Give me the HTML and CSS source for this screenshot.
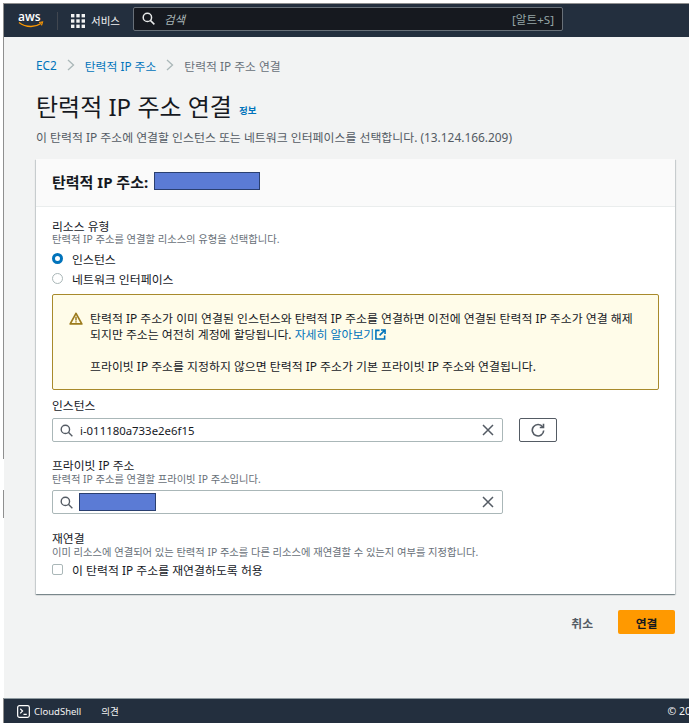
FILE: index.html
```html
<!DOCTYPE html>
<html lang="ko">
<head>
<meta charset="utf-8">
<title>탄력적 IP 주소 연결</title>
<link rel="stylesheet" href="styles.css">
</head>
<body>
<div class="frame">
  <header class="topnav">
    <svg class="aws" viewBox="0 0 28 17" width="28" height="17"><text x="0" y="9.5" class="aws-text">aws</text><path d="M1 11.500c3.500 2.800 8 4 12 4 3.300 0 7-1 10-3" fill="none" stroke="#f90" stroke-width="1.300"/><path d="M21 11.500l3.500-.5-1 3.300" fill="none" stroke="#f90" stroke-width="1.200"/></svg>
    <span class="nav-sep"></span>
    <svg class="grid-icon" viewBox="0 0 14 14" width="14" height="14" fill="#f2f3f3"><rect width="3.400" height="3.400"/><rect x="5.300" width="3.400" height="3.400"/><rect x="10.600" width="3.400" height="3.400"/><rect y="5.300" width="3.400" height="3.400"/><rect x="5.300" y="5.300" width="3.400" height="3.400"/><rect x="10.600" y="5.300" width="3.400" height="3.400"/><rect y="10.600" width="3.400" height="3.400"/><rect x="5.300" y="10.600" width="3.400" height="3.400"/><rect x="10.600" y="10.600" width="3.400" height="3.400"/></svg>
    <span class="nav-label">서비스</span>
    <div class="nav-search">
      <svg viewBox="0 0 14 14" width="13" height="13" fill="none" stroke="#e8eaea" stroke-width="1.600"><circle cx="5.800" cy="5.800" r="4.500"/><path d="M9 9l4.300 4.300"/></svg>
      <span class="nav-placeholder">검색</span>
      <span class="nav-shortcut">[알트+S]</span>
    </div>
  </header>

  <main class="content">
    <nav class="crumbs">
      <a class="link">EC2</a>
      <svg class="chev" viewBox="0 0 8 12" width="8" height="12"><path d="M1 1l5.500 5L1 11" fill="none" stroke="#aab7b8" stroke-width="1.300"/></svg>
      <a class="link">탄력적 IP 주소</a>
      <svg class="chev" viewBox="0 0 8 12" width="8" height="12"><path d="M1 1l5.500 5L1 11" fill="none" stroke="#aab7b8" stroke-width="1.300"/></svg>
      <span class="crumb-current">탄력적 IP 주소 연결</span>
    </nav>

    <div class="title-row">
      <h1>탄력적 IP 주소 연결</h1>
      <a class="info">정보</a>
    </div>
    <p class="lead">이 탄력적 IP 주소에 연결할 인스턴스 또는 네트워크 인터페이스를 선택합니다. (13.124.166.209)</p>

    <section class="card">
      <div class="card-head">
        <h2>탄력적 IP 주소:</h2>
        <span class="redact redact-head"></span>
      </div>
      <div class="card-body">
        <div class="field-label">리소스 유형</div>
        <div class="hint">탄력적 IP 주소를 연결할 리소스의 유형을 선택합니다.</div>
        <div class="radio-row radio-first"><span class="radio radio-on"></span><span>인스턴스</span></div>
        <div class="radio-row"><span class="radio"></span><span>네트워크 인터페이스</span></div>

        <div class="alert">
          <svg class="alert-icon" viewBox="0 0 14 13" width="14" height="13"><path d="M7 1.300L1.200 11.900h11.600z" fill="none" stroke="#9c7b1d" stroke-width="1.700" stroke-linejoin="round"/><path d="M7 4.800v3.600M7 9.200v1.200" stroke="#9c7b1d" stroke-width="1.500"/></svg>
          <div class="alert-text">
            <p>탄력적 IP 주소가 이미 연결된 인스턴스와 탄력적 IP 주소를 연결하면 이전에 연결된 탄력적 IP 주소가 연결 해제<br>되지만 주소는 여전히 계정에 할당됩니다. <a class="link">자세히 알아보기</a><svg class="ext" viewBox="0 0 12 12" width="11" height="11" fill="none" stroke="#0073bb" stroke-width="1.700"><path d="M5 1.500H1v9.500h9.500V7"/><path d="M6.500 1h4.500v4.500M11 1L5 7"/></svg></p>
            <p class="alert-gap">프라이빗 IP 주소를 지정하지 않으면 탄력적 IP 주소가 기본 프라이빗 IP 주소와 연결됩니다.</p>
          </div>
        </div>

        <div class="field-label label-inst">인스턴스</div>
        <div class="input-row">
          <div class="input">
            <svg viewBox="0 0 14 14" width="13" height="13" fill="none" stroke="#545b64" stroke-width="1.500"><circle cx="5.800" cy="5.800" r="4.500"/><path d="M9 9l4.300 4.300"/></svg>
            <span class="input-value">i-011180a733e2e6f15</span>
            <svg class="clear" viewBox="0 0 12 12" width="12" height="12" fill="none" stroke="#545b64" stroke-width="1.500"><path d="M1 1l10 10M11 1L1 11"/></svg>
          </div>
          <button class="refresh" type="button"><svg viewBox="0 0 14 14" width="14" height="14" fill="none" stroke="#545b64" stroke-width="1.600"><path d="M11.700 4A5.700 5.700 0 1 0 12.700 7.500"/><path d="M12.500 .8v3.700H8.800"/></svg></button>
        </div>

        <div class="field-label label-priv">프라이빗 IP 주소</div>
        <div class="hint hint-priv">탄력적 IP 주소를 연결할 프라이빗 IP 주소입니다.</div>
        <div class="input input-priv">
          <svg viewBox="0 0 14 14" width="13" height="13" fill="none" stroke="#545b64" stroke-width="1.500"><circle cx="5.800" cy="5.800" r="4.500"/><path d="M9 9l4.300 4.300"/></svg>
          <span class="redact redact-input"></span>
          <svg class="clear" viewBox="0 0 12 12" width="12" height="12" fill="none" stroke="#545b64" stroke-width="1.500"><path d="M1 1l10 10M11 1L1 11"/></svg>
        </div>

        <div class="field-label label-re">재연결</div>
        <div class="hint hint-re">이미 리소스에 연결되어 있는 탄력적 IP 주소를 다른 리소스에 재연결할 수 있는지 여부를 지정합니다.</div>
        <div class="radio-row check-row"><span class="check"></span><span>이 탄력적 IP 주소를 재연결하도록 허용</span></div>
      </div>
    </section>

    <div class="actions">
      <button class="btn-cancel" type="button">취소</button>
      <button class="btn-primary" type="button">연결</button>
    </div>
  </main>

  <footer class="foot">
    <svg viewBox="0 0 14 14" width="13" height="13" fill="none" stroke="#fff" stroke-width="1.300"><rect x=".7" y=".7" width="12.600" height="12.600" rx="2"/><path d="M3.500 4l2.500 2.500L3.500 9M7 10h3.500"/></svg>
    <span class="foot-shell">CloudShell</span>
    <span class="foot-fb">의견</span>
    <span class="foot-copy">© 2008</span>
  </footer>
</div>
<span class="frame-gap gap-a"></span>
<span class="frame-gap gap-b"></span>
</body>
</html>
```

FILE: styles.css
```css
* { box-sizing: border-box; }
html, body { margin: 0; padding: 0; background: #fff; }
body {
  width: 692px; height: 726px; overflow: hidden; position: relative;
  font-family: "Noto Sans", "Noto Sans CJK KR", sans-serif;
  font-size: 12px; color: #16191f; padding: 3px;
}
.frame {
  height: 720px; width: 686px; display: flex; flex-direction: column;
  border-top: 1px solid #8f8f8f; border-left: 1px solid #8f8f8f;
}
.topnav {
  height: 33px; flex: none; background: #232f3e; display: flex; align-items: center;
  padding-left: 14px; color: #f2f3f3;
}
.aws { flex: none; margin-top: -2px; }
.aws-text { font: 600 12px "Open Sans", sans-serif; fill: #fff; }
.nav-sep { width: 1px; height: 18px; background: #414750; margin: 0 13px 0 11px; }
.grid-icon { flex: none; }
.nav-label { margin-left: 6px; font-size: 10.500px; }
.nav-search {
  margin-left: 13px; width: 430px; height: 24px; flex: none; background: #16191f; border: 1px solid #687078;
  border-radius: 2px; display: flex; align-items: center; padding: 0 8px; margin-top: -4px;
}
.nav-placeholder { margin-left: 9px; font-style: italic; color: #aab7b8; font-size: 11.500px; }
.nav-shortcut { margin-left: auto; color: #95a5a6; font-size: 11.600px; }

.content { flex: 1; background: #f2f3f3; padding: 21px 14px 0 32px; min-height: 0; }
.crumbs { display: flex; align-items: center; height: 14px; font-size: 11.800px; }
.link { color: #0073bb; }
.chev { margin: 0 10px; }
.crumb-current { color: #687078; }
.title-row { display: flex; align-items: flex-end; margin-top: 20px; height: 30px; }
h1 { margin: 0; font-size: 24px; font-weight: 400; line-height: 30px; }
.info { color: #0073bb; font-size: 9.500px; font-weight: 700; margin: 0 0 4px 7px; line-height: 14px; }
.lead { margin: 7px 0 0; color: #545b64; font-size: 11.900px; line-height: 16px; }
.card {
  margin-top: 14px; width: 639px; height: 435px; background: #fff;
  box-shadow: 0 1px 1px 0 rgba(0,28,36,.35), 1px 1px 1px 0 rgba(0,28,36,.12), -1px 1px 1px 0 rgba(0,28,36,.12);
}
.card-head {
  height: 48px; background: #fafafa; border-bottom: 1px solid #eaeded; display: flex; align-items: center; padding: 0 16px 3px;
}
h2 { margin: 0; font-size: 15px; font-weight: 700; }
.redact { display: block; background: #5b7bd5; border: 1px solid #2a3f70; }
.redact-head { width: 106px; height: 18px; margin-left: 6px; }
.card-body { padding: 12px 16px 0; }
.field-label { font-size: 11.800px; line-height: 14px; color: #16191f; }
.hint { font-size: 10.300px; line-height: 13px; color: #687078; }
.radio-row { display: flex; align-items: center; gap: 9px; height: 20px; font-size: 11.900px; }
.radio-first { margin-top: 2px; }
.radio { width: 11px; height: 11px; border-radius: 50%; border: 1px solid #aab7b8; background: #fff; flex: none; }
.radio-on { border: 3.500px solid #0073bb; }
.alert {
  margin-top: 6px; width: 607px; height: 96px; background: #fffce9; border: 1px solid #a88a2c;
  border-radius: 2px; display: flex; padding: 15px 16px 0 16px; gap: 7px;
}
.alert-icon { flex: none; margin-top: 2px; }
.alert-text { font-size: 11.900px; line-height: 16px; word-break: keep-all; }
.alert-text p { margin: 0; }
.alert-text .alert-gap { margin-top: 16px; }
.ext { vertical-align: -1px; margin-left: 1px; }
.label-inst { margin-top: 8px; }
.input-row { display: flex; gap: 16px; margin-top: 6px; }
.input {
  width: 451px; height: 24px; background: #fff; border: 1px solid #aab7b8; border-radius: 2px;
  display: flex; align-items: center; padding: 0 7px; flex: none;
}
.input-value { margin-left: 7px; font-size: 11.400px; color: #16191f; }
.clear { margin-left: auto; margin-right: 1px; }
.refresh {
  width: 38px; height: 24px; padding: 0; background: #fff; border: 1px solid #545b64; border-radius: 2px;
  display: flex; align-items: center; justify-content: center;
}
.label-priv { margin-top: 16px; }
.hint-priv { margin-top: 1px; }
.input-priv { margin-top: 4px; }
.redact-input { width: 77px; height: 18px; margin-left: 6px; }
.label-re { margin-top: 17px; }
.hint-re { margin-top: 1px; }
.check { width: 11px; height: 11px; border: 1px solid #aab7b8; border-radius: 2px; background: #fff; flex: none; }
.check-row { margin-top: 0; height: 21px; }
.actions { display: flex; justify-content: flex-end; align-items: center; width: 639px; margin-top: 16px; }
.btn-cancel { background: none; border: 0; padding: 0; font: 700 11.800px "Noto Sans", "Noto Sans CJK KR", sans-serif; color: #545b64; margin-right: 25px; }
.btn-primary {
  width: 57px; height: 24px; background: #ff9900; border: 0; border-radius: 2px; padding: 0;
  font: 700 11.800px "Noto Sans", "Noto Sans CJK KR", sans-serif; color: #16191f;
}
.foot {
  height: 25px; flex: none; background: #232f3e; border-top: 1px solid #8f9aa0; color: #f2f3f3;
  display: flex; align-items: center; padding-left: 13px; font-size: 9.500px; white-space: nowrap; overflow: hidden;
}
.foot-shell { margin-left: 4px; }
.foot-fb { margin-left: 20px; }
.foot-copy { margin-left: auto; margin-right: -14px; font-size: 10.500px; }
.frame-gap { position: absolute; left: 3px; width: 1px; background: #fff; }
.gap-a { top: 459px; height: 31px; }
.gap-b { top: 518px; height: 180px; }
```
